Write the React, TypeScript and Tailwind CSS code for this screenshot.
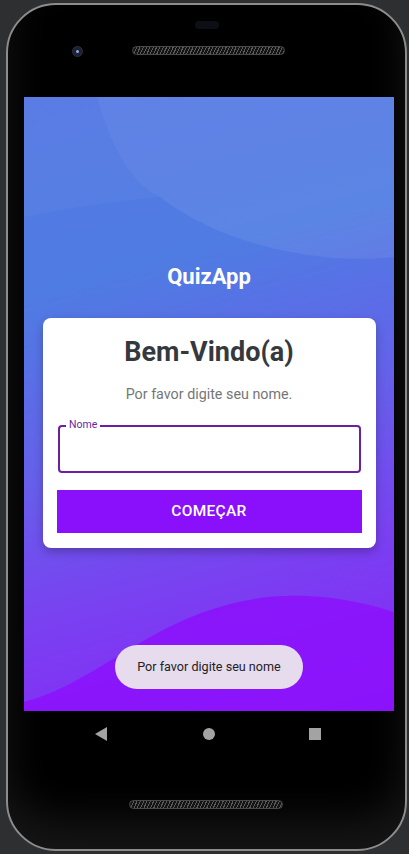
import { useState } from "react";

function Grill({ className }: { className: string }) {
  return (
    <div
      className={`h-[9px] rounded-full border border-[#4a4a4a] bg-[repeating-linear-gradient(115deg,#5a5a5a_0px,#5a5a5a_1px,#141414_1px,#141414_3px)] ${className}`}
    />
  );
}

export default function App() {
  const [nome, setNome] = useState("");

  return (
    <div className="w-[409px] h-[854px] bg-[#2d2f30] pt-[3px] pl-[6px] font-['Roboto',sans-serif] overflow-hidden">
      <div className="w-[401px] h-[848px] rounded-[50px] border-2 border-[#8c8c8c] bg-black flex flex-col shadow-[inset_0_-30px_40px_rgba(60,60,60,0.35)]">
        {/* top bezel */}
        <div className="h-[92px] flex flex-col">
          <div className="mt-[16px] mx-auto w-[24px] h-[8px] rounded-full bg-[#0e0e16]" />
          <div className="flex items-start mt-[17px]">
            <div className="ml-[64px] w-[11px] h-[11px] rounded-full bg-[#1d2130] border border-[#2c3140] flex items-center justify-center">
              <div className="w-[3px] h-[3px] rounded-full bg-[#8fa8ff]" />
            </div>
            <Grill className="ml-[49px] w-[153px]" />
          </div>
        </div>

        {/* screen */}
        <div className="ml-[16px] w-[370px] h-[614px] relative overflow-hidden bg-[linear-gradient(165deg,#5578e4_0%,#4f7ce2_28%,#6462ea_52%,#7a40f1_75%,#8824f7_100%)]">
          <svg className="absolute inset-0" width="370" height="614" viewBox="0 0 370 614">
            <path d="M0,0 L73,0 C88,55 110,88 136,100 C90,104 40,112 0,120 Z" fill="#ffffff" fillOpacity="0.03" />
            <path d="M73,0 L370,0 L370,160 C300,168 200,150 136,100 C110,88 88,55 73,0 Z" fill="#ffffff" fillOpacity="0.07" />
            <path d="M0,614 L0,605 C60,590 110,540 180,515 C230,497 290,490 370,515 L370,614 Z" fill="#8c10fc" fillOpacity="0.85" />
          </svg>

          <div className="relative flex flex-col items-center pt-[166px]">
            <h1 className="text-[22px] leading-[28px] font-bold text-white">QuizApp</h1>

            <div className="mt-[27px] w-[333px] h-[230px] bg-white rounded-[8px] shadow-[0_4px_10px_rgba(0,0,0,0.25)] px-[14px] pt-[17px] flex flex-col items-center">
              <h2 className="text-[27px] leading-[34px] font-bold text-[#35393d]">Bem-Vindo(a)</h2>
              <p className="mt-[15px] text-[14.3px] leading-[20px] text-[#767676]">Por favor digite seu nome.</p>

              <div className="mt-[21px] relative w-[303px] ml-[1px] h-[48px] rounded-[4px] border-2 border-[#6c1fa0]">
                <span className="absolute -top-[8px] left-[6px] bg-white px-[3px] text-[10.5px] leading-[12px] text-[#6c1fa0]">
                  Nome
                </span>
                <input
                  value={nome}
                  onChange={(e) => setNome(e.target.value)}
                  className="w-full h-full px-3 outline-none bg-transparent text-[15px]"
                />
              </div>

              <button className="mt-[17px] w-[305px] h-[43px] bg-[#8a10fc] text-white text-[15.5px] font-medium tracking-[0.3px]">
                COMEÇAR
              </button>
            </div>

            <div className="mt-[97px] w-[188px] h-[44px] rounded-full bg-[#e7dcee] flex items-center justify-center text-[12.6px] text-[#222]">
              Por favor digite seu nome
            </div>
          </div>
        </div>

        {/* nav bar */}
        <div className="ml-[16px] w-[370px] h-[46px] flex items-center">
          <svg className="ml-[71px]" width="12" height="14" viewBox="0 0 12 14">
            <path d="M12,0 L12,14 L0,7 Z" fill="#a3a3a3" />
          </svg>
          <div className="ml-[96px] w-[12px] h-[12px] rounded-full bg-[#a3a3a3]" />
          <div className="ml-[94px] w-[12px] h-[12px] bg-[#a3a3a3]" />
        </div>

        <div className="mt-[43px] flex">
          <Grill className="ml-[121px] w-[154px]" />
        </div>
      </div>
    </div>
  );
}
